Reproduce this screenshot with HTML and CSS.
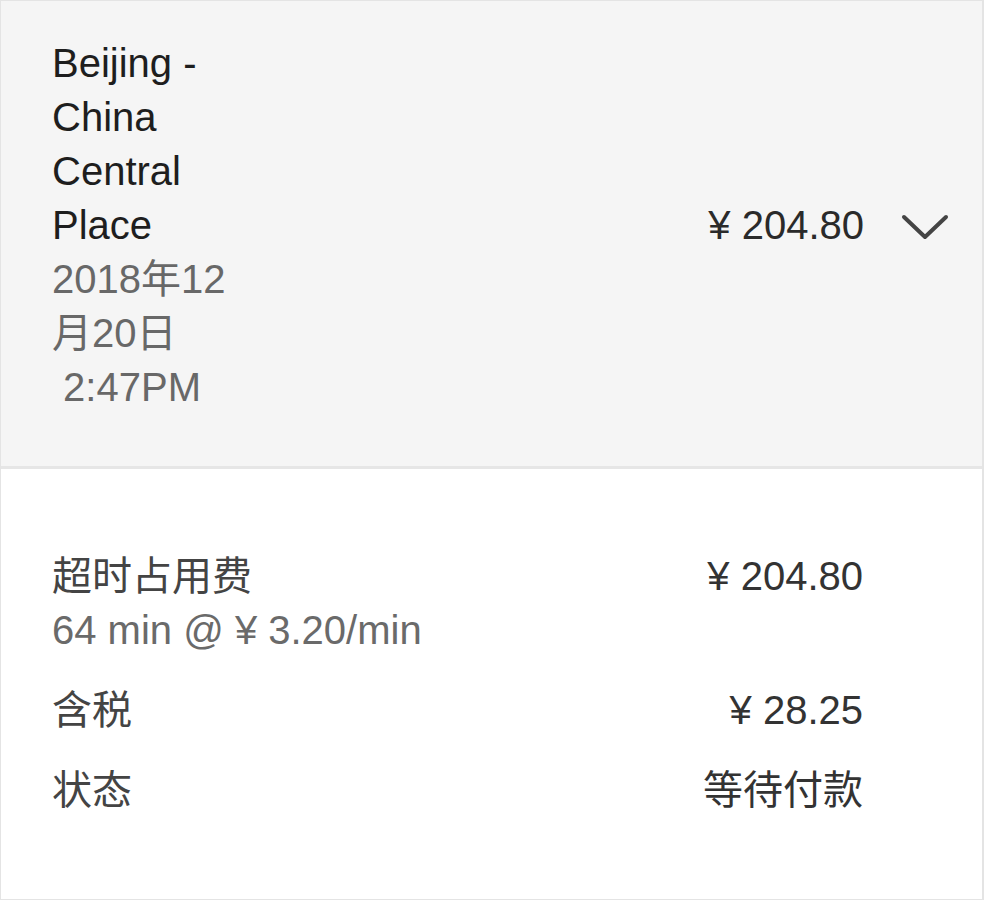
FILE: index.html
```html
<!DOCTYPE html>
<html>
<head>
    <title>Charging Session</title>
    <meta charset="utf-8">
    <meta name="viewport" content="width=device-width, initial-scale=1">
    <link rel="stylesheet" href="styles.css">
</head>
<body>
    <div class="card">
        <div class="summary">
            <div class="place">
                <div class="name">Beijing -<br>China<br>Central<br>Place</div>
                <div class="date">2018年12<br>月20日<br>&nbsp;2:47PM</div>
            </div>
            <div class="total">¥ 204.80</div>
            <svg class="chevron" width="48" height="26" viewBox="0 0 48 26">
                <polyline points="3,3 24,23 45,3" fill="none" stroke="#444" stroke-width="4" stroke-linecap="round" stroke-linejoin="round"/>
            </svg>
        </div>
        <div class="details">
            <div class="row">
                <div>
                    <div class="label">超时占用费</div>
                    <div class="sub">64 min @ ¥ 3.20/min</div>
                </div>
                <div class="value">¥ 204.80</div>
            </div>
            <div class="row">
                <div class="label">含税</div>
                <div class="value">¥ 28.25</div>
            </div>
            <div class="row">
                <div class="label">状态</div>
                <div class="value">等待付款</div>
            </div>
        </div>
    </div>
</body>
</html>
```

FILE: styles.css
```css
body {
    margin: 0;
    background: #fff;
    font-family: "Liberation Sans", "Noto Sans CJK SC", sans-serif;
    font-size: 40px;
    line-height: 54px;
}
.card {
    height: 898px;
    border: 1px solid #e4e4e4;
    border-right-width: 2px;
}
.summary {
    display: flex;
    align-items: center;
    padding: 35px 33px 52px 51px;
    background: #f5f5f5;
    border-bottom: 3px solid #e6e6e6;
}
.place {
    flex: 1;
}
.name {
    color: #1e1e1e;
}
.date {
    color: #686868;
}
.total {
    color: #2a2a2a;
    margin-right: 37px;
}
.chevron {
    display: block;
    margin-top: 4px;
}
.details {
    display: flex;
    flex-direction: column;
    gap: 26px;
    padding: 80px 119px 0 51px;
}
.row {
    display: flex;
    justify-content: space-between;
    align-items: flex-start;
}
.label {
    color: #444;
}
.sub {
    color: #6a6a6a;
}
.value {
    color: #333;
}
```
